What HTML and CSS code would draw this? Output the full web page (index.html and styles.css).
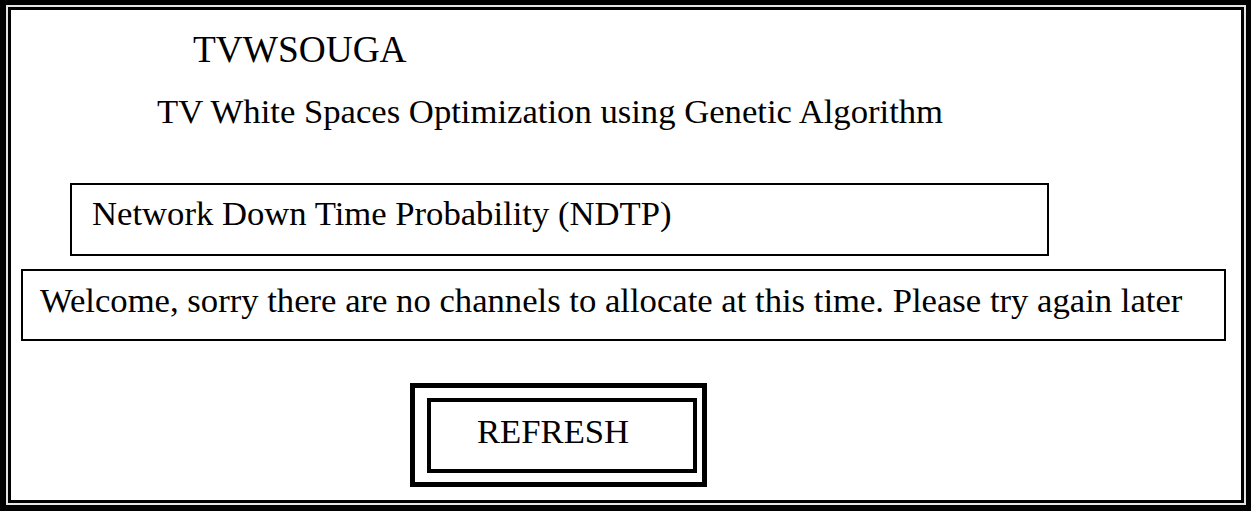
FILE: index.html
```html
<!DOCTYPE html>
<html lang="en">
<head>
<meta charset="utf-8">
<title>TVWSOUGA</title>
<link rel="stylesheet" href="styles.css">
</head>
<body>
<div class="frame">
  <div class="frame-light">
    <main class="content">
      <h1 class="title">TVWSOUGA</h1>
      <p class="subtitle">TV White Spaces Optimization using Genetic Algorithm</p>
      <div class="box box-ndtp">Network Down Time Probability (NDTP)</div>
      <div class="box box-msg">Welcome, sorry there are no channels to allocate at this time. Please try again later</div>
      <div class="btn-outer">
        <div class="btn-inner">REFRESH</div>
      </div>
    </main>
  </div>
</div>
</body>
</html>
```

FILE: styles.css
```css
html, body {
  margin: 0;
  padding: 0;
  background: #000;
}
body {
  font-family: "Liberation Serif", "Times New Roman", serif;
  color: #000;
}
.frame {
  width: 1251px;
  height: 511px;
  box-sizing: border-box;
  border-style: solid;
  border-color: #000;
  border-width: 5px 5px 6px 6px;
}
.frame-light {
  height: 100%;
  box-sizing: border-box;
  border: 2px solid #e4e4e4;
}
.content {
  height: 100%;
  box-sizing: border-box;
  border: 3px solid #000;
  background: #fff;
  display: flex;
  flex-direction: column;
  align-items: flex-start;
}
.title {
  margin: 20px 0 0 182px;
  font-size: 37.33px;
  font-weight: normal;
  line-height: 40px;
}
.subtitle {
  margin: 21px 0 0 146px;
  font-size: 34.67px;
  line-height: 40px;
}
.box {
  box-sizing: border-box;
  border: 2px solid #000;
  font-size: 34.67px;
  line-height: 40px;
  white-space: nowrap;
}
.box-ndtp {
  margin: 52px 0 0 59px;
  width: 979px;
  height: 73px;
  padding: 8px 0 0 20px;
}
.box-msg {
  margin: 13px 0 0 10px;
  width: 1205px;
  height: 72px;
  padding: 9px 0 0 17px;
}
.btn-outer {
  margin: 42px 0 0 399px;
  border: 5px solid #000;
  padding: 10px 5px 9px 12px;
}
.btn-inner {
  box-sizing: border-box;
  width: 270px;
  height: 75px;
  border: 4px solid #000;
  padding: 9px 0 0 46px;
  font-size: 34.67px;
  line-height: 40px;
}
```
